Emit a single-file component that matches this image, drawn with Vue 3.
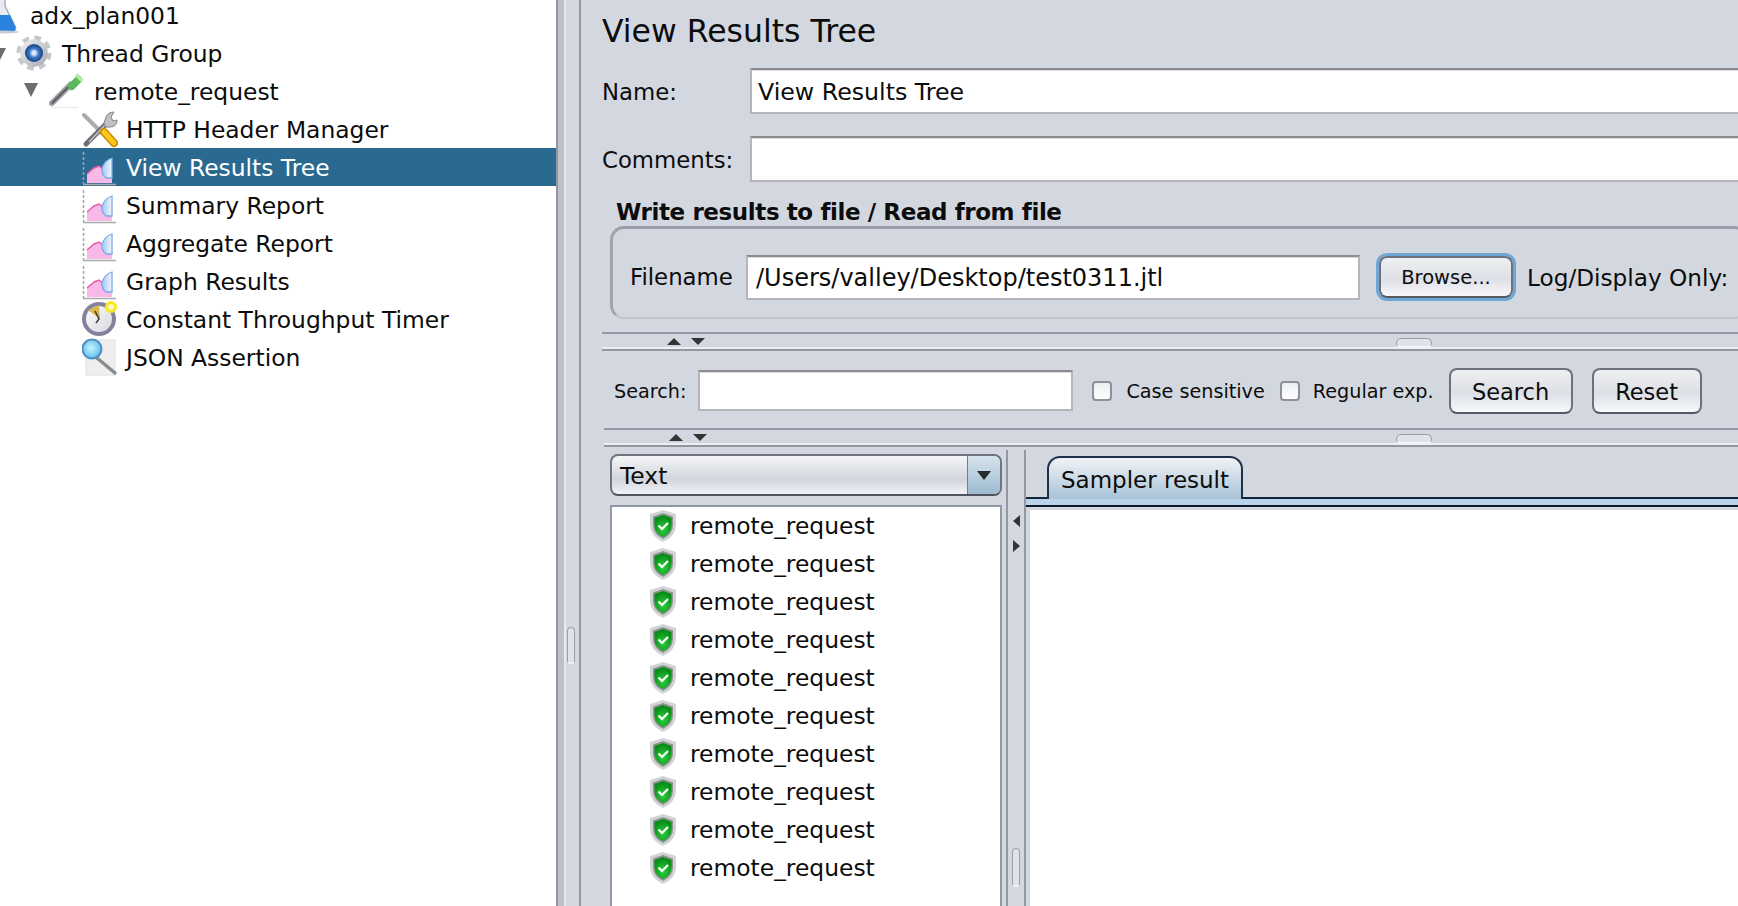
<template>
  <!-- iconos compartidos -->
  <svg class="defs" width="0" height="0">
    <defs>
      <linearGradient id="gMetal" x1="0" y1="0" x2="1" y2="1">
        <stop offset="0" stop-color="#f2f3f5" />
        <stop offset="1" stop-color="#a4a7ae" />
      </linearGradient>
      <radialGradient id="gCore" cx="0.5" cy="0.5" r="0.5">
        <stop offset="0.2" stop-color="#dfe9fa" />
        <stop offset="0.5" stop-color="#3f7cc8" />
        <stop offset="1" stop-color="#173f80" />
      </radialGradient>
      <linearGradient id="gBubble" x1="0" y1="0" x2="1" y2="0">
        <stop offset="0" stop-color="#a0c6f5" />
        <stop offset="1" stop-color="#f2f7fe" />
      </linearGradient>
      <radialGradient id="gLens" cx="0.45" cy="0.45" r="0.55">
        <stop offset="0" stop-color="#c8f2fc" />
        <stop offset="1" stop-color="#62c0ee" />
      </radialGradient>
      <radialGradient id="gShield" cx="0.5" cy="0.65" r="0.6">
        <stop offset="0" stop-color="#2bd03e" />
        <stop offset="1" stop-color="#078a16" />
      </radialGradient>
      <linearGradient id="gFace" x1="0" y1="0" x2="1" y2="1">
        <stop offset="0" stop-color="#ffffff" />
        <stop offset="1" stop-color="#d5d5dc" />
      </linearGradient>
    </defs>
    <symbol id="i-flask" viewBox="0 0 36 38">
      <path d="M14 0h6v10l10 20q2 5-3 5H9q-5 0-3-5l8-20z" fill="#e8ecf2" stroke="#a8b0bc" stroke-width="1.5" />
      <path d="M11 19h14l5 11q2 5-3 5H8q-4 0-2-5z" fill="#2a84de" />
      <ellipse cx="19" cy="36" rx="15" ry="1.5" fill="#c5cbd4" />
    </symbol>
    <symbol id="i-gear" viewBox="0 0 38 38">
      <circle cx="19" cy="19" r="15.500" fill="none" stroke="#c4c7cc" stroke-width="6" stroke-dasharray="6.700 5.470" />
      <circle cx="19" cy="19" r="14.500" fill="url(#gMetal)" />
      <circle cx="19" cy="19" r="9.500" fill="url(#gCore)" />
    </symbol>
    <symbol id="i-dropper" viewBox="0 0 38 38">
      <path d="M3 32L23 12" stroke="#9a9da2" stroke-width="6" stroke-linecap="round" />
      <path d="M3 32L22 13" stroke="#55585d" stroke-width="2" />
      <path d="M24 14L31 7" stroke="#5cb85c" stroke-width="8" stroke-linecap="round" />
      <path d="M30 3l4 4" stroke="#b5e8a0" stroke-width="4" stroke-linecap="round" />
      <path d="M3 36.500h28" stroke="#e4e4e4" stroke-width="1" />
    </symbol>
    <symbol id="i-tools" viewBox="0 0 36 38">
      <path d="M2 5L20 23" stroke="#a9abb0" stroke-width="4" stroke-linecap="round" />
      <path d="M4 34L26 12" stroke="#6a6c72" stroke-width="5" stroke-linecap="round" />
      <path d="M7 32L24 14" stroke="#c2c4c8" stroke-width="1.500" />
      <path d="M22 22L32 33" stroke="#c98a00" stroke-width="8" stroke-linecap="round" />
      <path d="M22 22L32 33" stroke="#ffc81e" stroke-width="5" stroke-linecap="round" />
      <path d="M24 7q2-5 8-5l-3 5 2 4 4-1q0 7-7 7-5 1-6-4z" fill="#bfc1c6" stroke="#84868c" stroke-width="1" />
    </symbol>
    <symbol id="i-graph" viewBox="0 0 36 38">
      <path d="M1.500 4v32" stroke="#a4a4a4" stroke-width="1.500" stroke-dasharray="3 2" />
      <path d="M1 36.500h33" stroke="#a9a9a9" stroke-width="1.500" />
      <path d="M5 35V26l7-6 5-2 7 6 6 6v5z" fill="#f8b8e8" />
      <path d="M5 26l7-6 5-2 7 6 6 6" fill="none" stroke="#e85ba8" stroke-width="1.500" />
      <path d="M30 10q-7 2-10 10-1 6 4 10h6z" fill="url(#gBubble)" stroke="#7aaae8" stroke-width="1.300" />
    </symbol>
    <symbol id="i-clock" viewBox="0 0 36 38">
      <circle cx="17" cy="19" r="15" fill="url(#gFace)" stroke="#85829e" stroke-width="4" />
      <path d="M6 10l11-5 1 14z" fill="#d9b84e" />
      <path d="M13 11l4 8-3 4" fill="none" stroke="#3c3c3c" stroke-width="1.500" />
      <circle cx="29" cy="7" r="4.500" fill="#fff7b5" stroke="#f2ea1d" stroke-width="3" />
    </symbol>
    <symbol id="i-lens" viewBox="0 0 36 38">
      <rect x="4" y="2" width="29" height="35" fill="#eeeeee" stroke="#e0e0e0" />
      <path d="M15 20L33 35" stroke="#8a8c90" stroke-width="3.500" stroke-linecap="round" />
      <circle cx="10" cy="11" r="9.500" fill="url(#gLens)" stroke="#4d8fc4" stroke-width="2" />
    </symbol>
    <symbol id="i-shield" viewBox="0 0 32 38">
      <path d="M16 3l13 4v11q0 11-13 17Q3 29 3 18V7z" fill="#d2d3d4" />
      <path d="M16 6l10 3.500V18q0 9-10 14Q6 27 6 18V9.500z" fill="#8d958e" />
      <path d="M16 8l8.500 3V18q0 8-8.500 12-8.500-4-8.500-12v-7z" fill="url(#gShield)" />
      <path d="M11.500 18.500l3.500 3.500 6-6" fill="none" stroke="#fff" stroke-width="2.200" />
    </symbol>
  </svg>

  <div class="ventana">
    <!-- arbol del plan -->
    <div class="arbol">
      <div
        v-for="n in nodos"
        :key="n.texto"
        :class="['fila', 'd' + n.nivel, n.activo ? 'activo' : '']"
      >
        <svg class="ico"><use :href="'#i-' + n.icono" /></svg>
        <span v-if="n.abierto" class="flecha"></span>
        <span class="etiqueta">{{ n.texto }}</span>
      </div>
    </div>

    <div class="sep-v">
      <div class="asa-v asa-izq"></div>
    </div>

    <!-- panel derecho -->
    <div class="panel">
      <div class="titulo">View Results Tree</div>
      <div class="campo">
        <label>Name:</label>
        <div class="input grande">View Results Tree</div>
      </div>
      <div class="campo campo2">
        <label>Comments:</label>
        <div class="input grande"></div>
      </div>

      <div class="subtitulo">Write results to file / Read from file</div>
      <div class="grupo">
        <label>Filename</label>
        <div class="input fichero">/Users/valley/Desktop/test0311.jtl</div>
        <button class="btn foco">Browse...</button>
        <span class="log">Log/Display Only:</span>
      </div>

      <div class="sep-h">
        <span class="up"></span><span class="down"></span>
        <span class="asa-h"></span>
      </div>

      <div class="busqueda">
        <span class="peq">Search:</span>
        <div class="input buscar"></div>
        <span class="check"></span><span class="peq txt1">Case sensitive</span>
        <span class="check c2"></span><span class="peq txt2">Regular exp.</span>
        <button class="btn grande-b b-search">Search</button>
        <button class="btn grande-b b-reset">Reset</button>
      </div>

      <div class="sep-h sep2">
        <span class="up"></span><span class="down"></span>
        <span class="asa-h"></span>
      </div>

      <div class="inferior">
        <div class="col-lista">
          <div class="combo">
            <span class="combo-txt">Text</span>
            <span class="combo-btn"><i></i></span>
          </div>
          <div class="lista">
            <div v-for="i in 10" :key="i" class="res">
              <svg class="escudo"><use href="#i-shield" /></svg>
              <span>remote_request</span>
            </div>
          </div>
        </div>

        <div class="sep-m">
          <span class="left"></span><span class="right"></span>
          <div class="asa-v asa-der"></div>
        </div>

        <div class="col-result">
          <div class="tabs">
            <div class="tab">Sampler result</div>
          </div>
          <div class="banda"></div>
          <div class="contenido"></div>
        </div>
      </div>
    </div>
  </div>
</template>

<script setup>
// nodos del arbol de la izquierda
const nodos = [
  { texto: 'adx_plan001', nivel: 0, icono: 'flask' },
  { texto: 'Thread Group', nivel: 1, icono: 'gear', abierto: true },
  { texto: 'remote_request', nivel: 2, icono: 'dropper', abierto: true },
  { texto: 'HTTP Header Manager', nivel: 3, icono: 'tools' },
  { texto: 'View Results Tree', nivel: 3, icono: 'graph', activo: true },
  { texto: 'Summary Report', nivel: 3, icono: 'graph' },
  { texto: 'Aggregate Report', nivel: 3, icono: 'graph' },
  { texto: 'Graph Results', nivel: 3, icono: 'graph' },
  { texto: 'Constant Throughput Timer', nivel: 3, icono: 'clock' },
  { texto: 'JSON Assertion', nivel: 3, icono: 'lens' },
]
</script>

<style>
html, body { margin: 0; overflow: hidden; }
</style>

<style scoped>
* { box-sizing: border-box; }

.defs { position: absolute; }

.ventana {
  display: flex;
  width: 1738px;
  height: 906px;
  overflow: hidden;
  background: #d3d8e0;
  color: #0c0c0c;
  font-family: "DejaVu Sans", sans-serif;
  font-size: 23.4px;
}

/* ── Arbol ── */
.arbol {
  width: 556px;
  flex-shrink: 0;
  background: #fff;
  overflow: hidden;
}
.arbol .fila:first-child { margin-top: -4px; }

.fila {
  position: relative;
  display: flex;
  align-items: center;
  height: 38px;
  gap: 9px;
  white-space: nowrap;
}
.etiqueta { padding-top: 2px; }
.fila.activo { background: #2a6a90; color: #fff; }
.ico { width: 36px; height: 38px; flex-shrink: 0; }
.d0 .ico { margin-left: -15px; }
.d1 .ico { margin-left: 16px; }
.d1 { gap: 10px; }
.d2 .ico { margin-left: 49px; }
.d3 .ico { margin-left: 82px; }
.d3 { gap: 8px; }

.flecha {
  position: absolute;
  top: 11px;
  border-left: 7px solid transparent;
  border-right: 7px solid transparent;
  border-top: 14px solid #6c6c6c;
}
.d1 .flecha { left: -8px; top: 14px; }
.d2 .flecha { left: 24px; }

/* ── Separador vertical ── */
.sep-v {
  width: 25px;
  flex-shrink: 0;
  display: flex;
  justify-content: center;
  border-left: 2px solid #9297a3;
  border-right: 2px solid #9297a3;
  box-shadow: inset 6px 0 0 #bcc0c9, inset 8px 0 0 #e7e9ee;
}
.asa-v {
  width: 8px;
  height: 37px;
  border: 1px solid #9a9fab;
  border-bottom: 2px solid #f3f4f7;
  border-radius: 4px;
  background: #dfe2e8;
}
.asa-izq { margin-top: 627px; margin-left: 4px; }

/* ── Panel derecho ── */
.panel {
  flex: 1;
  min-width: 0;
  padding-left: 21px;
  display: flex;
  flex-direction: column;
  white-space: nowrap;
}
.titulo {
  height: 60px;
  font-size: 31.5px;
  line-height: 63px;
}
.campo {
  display: flex;
  align-items: center;
  margin-top: 8px;
}
.campo label { width: 148px; padding-top: 2px; font-size: 22.8px; }
.campo2 { margin-top: 22px; }

.input {
  background: #fff;
  border: 2px solid #b4b6bb;
  border-top-color: #8a8c92;
  box-shadow: inset 0 1px 0 #dcdcdc;
  display: flex;
  align-items: center;
}
.grande { flex: 1; height: 46px; padding: 2px 0 0 6px; margin-right: -4px; font-size: 23.7px; }

.subtitulo {
  height: 44px;
  padding: 15px 0 0 14px;
  font-size: 23px;
  line-height: 30px;
  font-weight: 700;
  letter-spacing: -0.4px;
}
.grupo {
  display: flex;
  align-items: center;
  height: 93px;
  margin-left: 8px;
  margin-right: -10px;
  padding: 8px 0 0 17px;
  border: 2px solid #c0c4cc;
  border-top: 3px solid #9a9ea8;
  border-left: 3px solid #9fa3ad;
  border-radius: 14px;
}
.grupo label { width: 116px; flex-shrink: 0; font-size: 22.8px; }
.fichero {
  width: 614px;
  height: 45px;
  padding: 2px 0 0 8px;
  flex-shrink: 0;
  font-size: 24px;
}
.log { margin-left: 14px; font-size: 23.2px; }

.btn {
  border: 2px solid #6d717b;
  border-bottom-color: #555963;
  border-radius: 8px;
  background: linear-gradient(#eff0f3, #dcdfe5 55%, #f7f9fd);
  color: #0c0c0c;
  font-family: inherit;
  padding: 0;
}
.foco {
  width: 134px;
  height: 42px;
  margin-left: 19px;
  font-size: 19.5px;
  flex-shrink: 0;
  box-shadow: 0 0 0 3px #6ea7d6;
}

/* ── Separador horizontal ── */
.sep-h {
  position: relative;
  height: 19px;
  margin-top: 13px;
  border-top: 2px solid #9297a3;
  border-bottom: 2px solid #9297a3;
  box-shadow: inset 0 -2px 0 #eceef2;
}
.sep2 { margin-top: 0; margin-left: 2px; }
.up, .down {
  position: absolute;
  top: 4px;
  border-left: 7px solid transparent;
  border-right: 7px solid transparent;
}
.up { left: 65px; border-bottom: 7px solid #333; }
.down { left: 89px; border-top: 7px solid #333; }
.asa-h {
  position: absolute;
  left: 794px;
  top: 4px;
  width: 36px;
  height: 10px;
  border: 1px solid #9a9fab;
  border-bottom: 2px solid #f3f4f7;
  border-radius: 5px;
  background: #dfe2e8;
}
.sep2 .asa-h { left: 792px; }

.busqueda {
  display: flex;
  align-items: center;
  height: 77px;
  padding: 2px 0 0 12px;
}
.peq { font-size: 19.2px; padding-top: 2px; }
.buscar { width: 375px; height: 41px; margin-left: 12px; }
.check {
  width: 20px;
  height: 20px;
  margin-left: 19px;
  border: 2px solid #8b909b;
  border-radius: 4px;
  background: linear-gradient(#eceef2, #fff);
}
.c2 { margin-left: 15px; }
.txt1 { margin-left: 14px; }
.txt2 { margin-left: 13px; }
.grande-b { height: 46px; padding-top: 2px; font-size: 22.5px; }
.b-search { width: 124px; margin-left: 15px; }
.b-reset { width: 110px; margin-left: 19px; }

/* ── Zona inferior ── */
.inferior {
  flex: 1;
  min-height: 0;
  display: flex;
  margin-left: 8px;
}
.col-lista { width: 392px; flex-shrink: 0; padding-top: 7px; }
.combo {
  display: flex;
  height: 42px;
  border: 2px solid #6f7480;
  border-bottom-color: #4f535d;
  border-radius: 8px;
  overflow: hidden;
  background: linear-gradient(#f5f6f8, #d2d5dc 60%, #f0f2f6);
}
.combo-txt { flex: 1; padding-left: 8px; line-height: 40px; }
.combo-btn {
  width: 33px;
  display: flex;
  align-items: center;
  justify-content: center;
  border-left: 1px solid #5f84a0;
  background: linear-gradient(#d6e3ed, #9dbbd1);
}
.combo-btn i {
  border-left: 7px solid transparent;
  border-right: 7px solid transparent;
  border-top: 9px solid #2a2a2a;
}
.lista {
  height: 420px;
  margin-top: 9px;
  background: #fff;
  border: 2px solid #9297a3;
}
.res {
  display: flex;
  align-items: center;
  height: 38px;
  padding-left: 35px;
  gap: 11px;
}
.escudo { width: 32px; height: 38px; flex-shrink: 0; }

.sep-m {
  position: relative;
  width: 24px;
  flex-shrink: 0;
  margin-top: 3px;
  box-shadow: inset 4px 0 0 #d3d8e0, inset 6px 0 0 #9297a3, inset -2px 0 0 #9297a3;
}
.left, .right {
  position: absolute;
  left: 11px;
  border-top: 6px solid transparent;
  border-bottom: 6px solid transparent;
}
.left { top: 65px; border-right: 7px solid #333; }
.right { top: 90px; border-left: 7px solid #333; }
.asa-der { position: absolute; left: 10px; top: 398px; height: 39px; }

.col-result { flex: 1; min-width: 0; display: flex; flex-direction: column; }
.tabs {
  height: 52px;
  padding: 9px 0 0 21px;
  border-bottom: 2px solid #15253a;
}
.tab {
  width: 196px;
  height: 43px;
  border: 2px solid #1c3048;
  border-bottom: none;
  border-radius: 13px 13px 0 0;
  background: linear-gradient(#f0f3f6, #a8c2d7);
  text-align: center;
  line-height: 44px;
  font-size: 23px;
}
.banda {
  height: 8px;
  background: #b8d3ea;
  border-bottom: 2px solid #0d1a2a;
}
.contenido {
  flex: 1;
  margin: 3px 0 0 4px;
  background: #fff;
}
</style>
